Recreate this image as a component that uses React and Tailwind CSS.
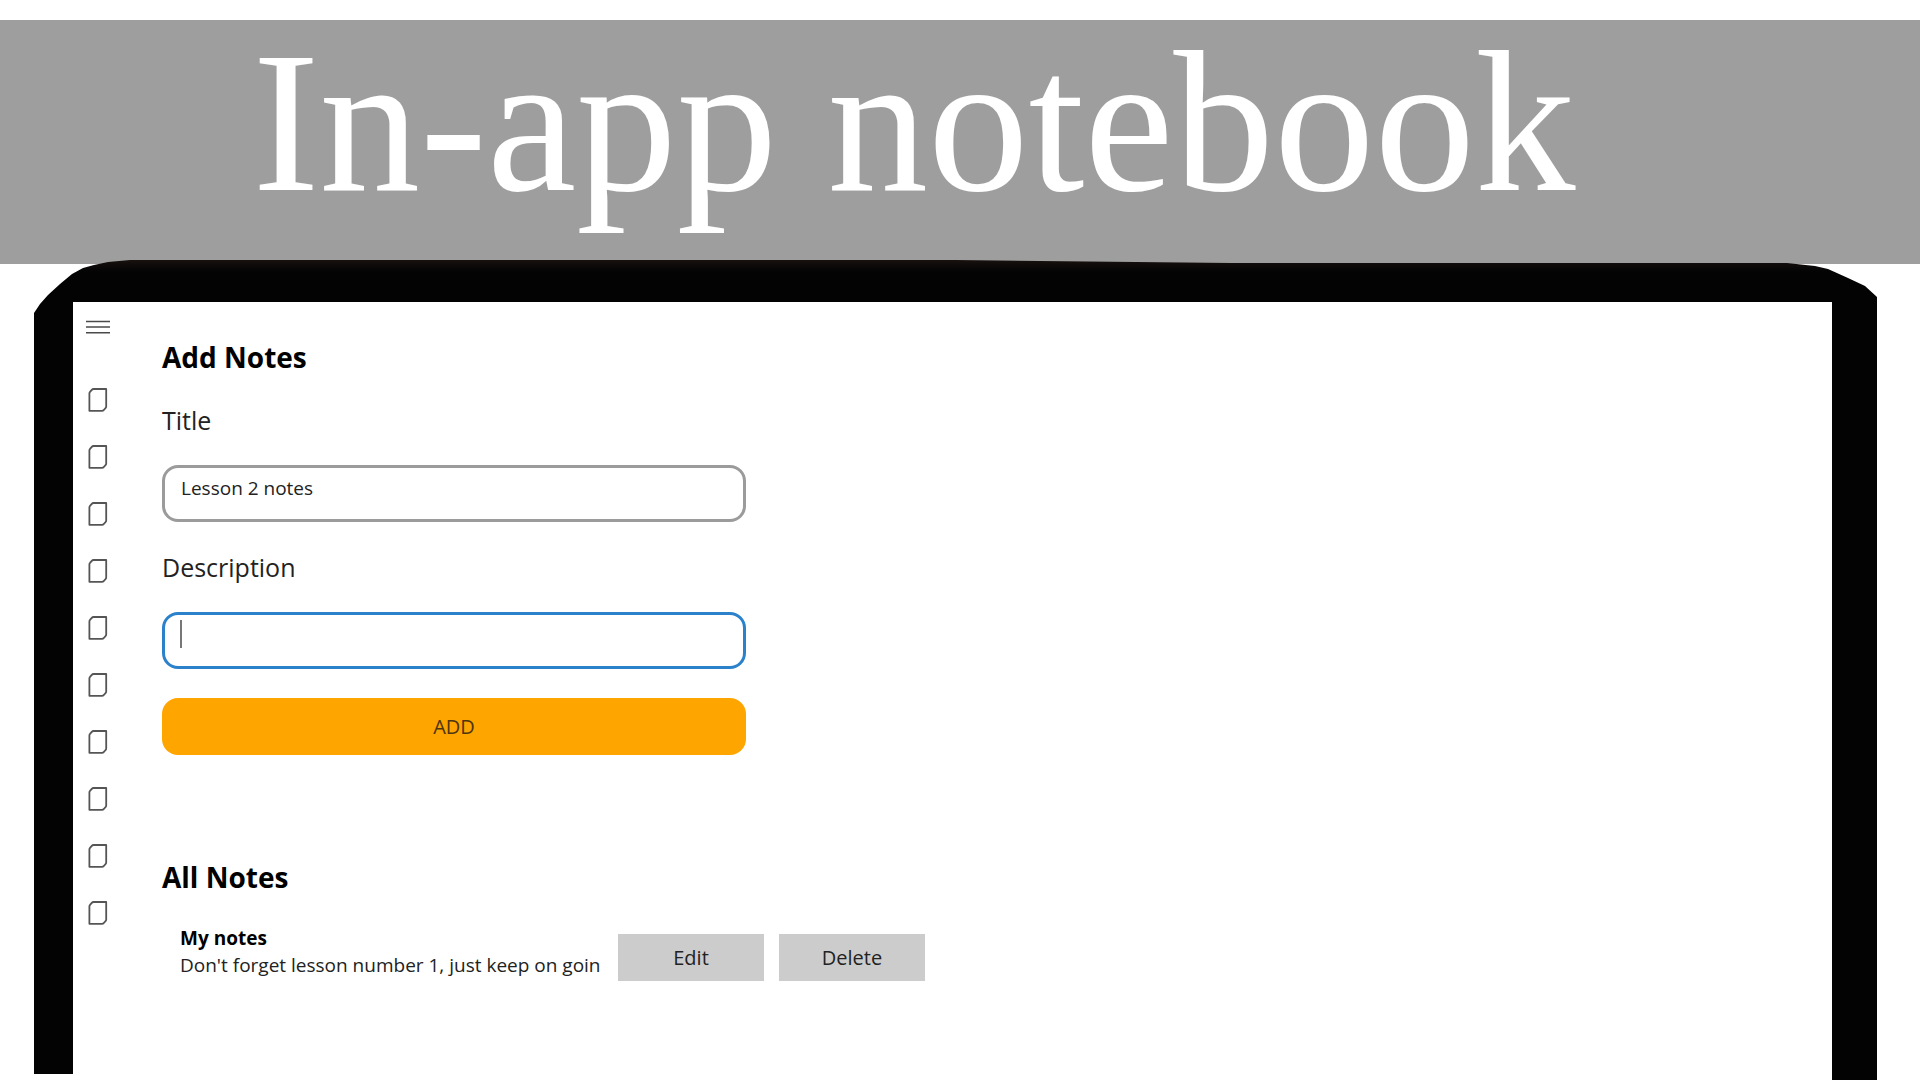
import React, { useState } from "react";

const initialNotes = [
  {
    id: 1,
    title: "My notes",
    description: "Don't forget lesson number 1, just keep on goin",
  },
];

const pages = [
  "Page 1",
  "Page 2",
  "Page 3",
  "Page 4",
  "Page 5",
  "Page 6",
  "Page 7",
  "Page 8",
  "Page 9",
  "Page 10",
];

const MenuIcon = () => (
  <svg width="24" height="14" viewBox="0 0 24 14" fill="none" stroke="#4a4a4a" strokeWidth="1.5">
    <path d="M0 1.5H24M0 7H24M0 12.8H24" />
  </svg>
);

const PageIcon = () => (
  <svg width="20" height="24" viewBox="0 0 20 24" fill="none" stroke="#555555" strokeWidth="1.8">
    <path d="M5.5 1H18.2V18.5Q18.2 19.5 17.5 20.2L15.8 22Q15 22.8 14 22.8H1.4V5.5Q1.4 4.5 2 3.9L3.8 1.8Q4.5 1 5.5 1Z" strokeLinejoin="round" />
  </svg>
);

const Sidebar = () => (
  <aside className="w-[50px] shrink-0">
    <button aria-label="Menu" className="flex h-[50px] w-full items-center justify-center">
      <MenuIcon />
    </button>
    <nav className="mt-[19px]">
      {pages.map((page) => (
        <a
          key={page}
          href="#"
          aria-label={page}
          className="flex h-[57px] items-center justify-center"
        >
          <PageIcon />
        </a>
      ))}
    </nav>
  </aside>
);

const App = () => {
  const [notes, setNotes] = useState(initialNotes);
  const [title, setTitle] = useState("Lesson 2 notes");
  const [description, setDescription] = useState("");

  const addNote = (e) => {
    e.preventDefault();
    if (!title || !description) return;
    setNotes([...notes, { id: Date.now(), title, description }]);
    setTitle("");
    setDescription("");
  };

  // Put a note back into the form
  const editNote = (note) => {
    setTitle(note.title);
    setDescription(note.description);
    setNotes(notes.filter((n) => n.id !== note.id));
  };

  const deleteNote = (id) => {
    setNotes(notes.filter((n) => n.id !== id));
  };

  return (
    <div className="flex min-h-screen flex-col bg-white pt-5 font-['Open_Sans','Noto_Sans',sans-serif] text-[#222222]">
      <header className="bg-[#9e9e9e] pr-[92px] text-center">
        <h1 className="h-[244px] font-['Liberation_Serif',serif] text-[201px] leading-[204px] whitespace-nowrap text-white">
          In-app notebook
        </h1>
      </header>

      {/* Device frame, clipped to its worn corners */}
      <div className="-mt-[5px] mr-[43px] ml-[34px] flex flex-1 bg-linear-to-b from-[#1a1310] to-[#030304] to-[14px] pt-[43px] pr-[45px] pl-[39px] [clip-path:polygon(0_54px,6px_45px,14px_36px,26px_25px,38px_15px,49px_9px,60px_6px,74px_3px,96px_1px,50%_1px,65%_4px,calc(100%-90px)_4px,calc(100%-62px)_7px,calc(100%-49px)_10px,calc(100%-29px)_19px,calc(100%-12px)_27px,100%_38px,100%_100%,39px_100%,39px_calc(100%-6px),0_calc(100%-6px))]">
        <div className="flex min-w-0 flex-1 bg-white">
          <Sidebar />

          <main className="min-w-0 flex-1 pt-[37px] pl-[39px]">
            <form onSubmit={addNote} className="flex max-w-[584px] flex-col gap-[29px]">
              <h2 className="text-[28px] leading-9 font-bold text-black">Add Notes</h2>
              <label htmlFor="title" className="text-[25px] leading-8">
                Title
              </label>
              <input
                id="title"
                type="text"
                value={title}
                onChange={(e) => setTitle(e.target.value)}
                className="h-[57px] w-full rounded-2xl border-[3px] border-[#9b9b9b] px-4 pb-3 text-[19px] outline-none"
              />
              <label htmlFor="description" className="text-[25px] leading-8">
                Description
              </label>
              <div className="relative h-[57px]">
                <input
                  id="description"
                  type="text"
                  value={description}
                  onChange={(e) => setDescription(e.target.value)}
                  className="h-full w-full rounded-2xl border-[3px] border-[#2b82cb] px-4 pb-3 text-[19px] outline-none"
                />
                {!description && (
                  <span className="pointer-events-none absolute top-2 left-[18px] h-7 w-[2px] bg-[#777777]" />
                )}
              </div>
              <button
                type="submit"
                className="h-[57px] w-full rounded-2xl bg-[#ffa500] text-xl text-[#4d3510]"
              >
                ADD
              </button>
            </form>

            <h2 className="mt-[104px] text-[28px] leading-9 font-bold text-black">All Notes</h2>
            <ul className="mt-[30px] pl-[18px]">
              {notes.map((note) => (
                <li key={note.id} className="flex items-end gap-[15px]">
                  <div className="flex items-end">
                    <div className="w-[438px] overflow-hidden pb-[2px] whitespace-nowrap">
                      <h3 className="text-[19px] leading-[27px] font-bold text-black">{note.title}</h3>
                      <p className="text-[19px] leading-[27px]">{note.description}</p>
                    </div>
                    <button
                      onClick={() => editNote(note)}
                      className="h-[47px] w-[146px] bg-[#cccccc] text-xl"
                    >
                      Edit
                    </button>
                  </div>
                  <button
                    onClick={() => deleteNote(note.id)}
                    className="h-[47px] w-[146px] bg-[#cccccc] text-xl"
                  >
                    Delete
                  </button>
                </li>
              ))}
            </ul>
          </main>
        </div>
      </div>
    </div>
  );
};

export default App;
